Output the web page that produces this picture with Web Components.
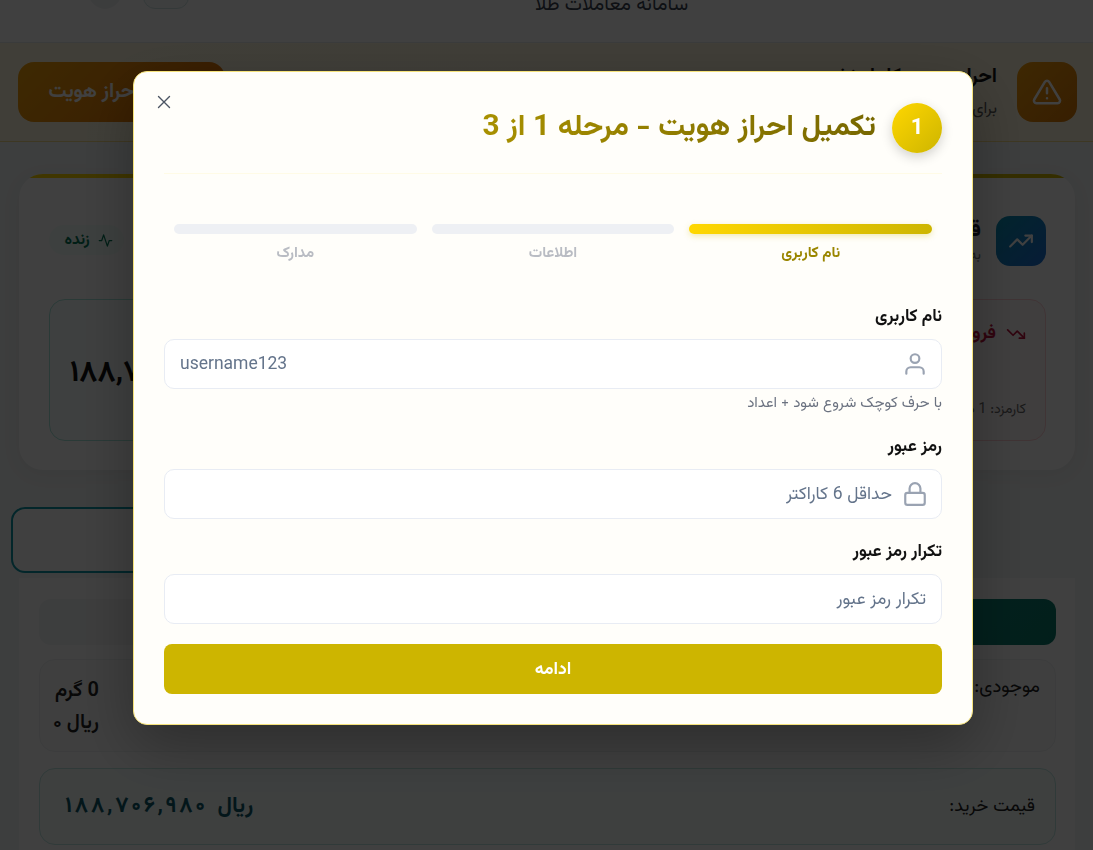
<!DOCTYPE html>
<html lang="fa" dir="rtl">
<head>
<meta charset="utf-8">
<title>سامانه معاملات طلا</title>
<style>
  html, body { margin: 0; height: 850px; overflow: hidden; background: #f2f5f5; }
  body { font-family: Vazirmatn, "Noto Sans Arabic", "DejaVu Sans", sans-serif; color: #1a2030; }
</style>
</head>
<body>
<gold-page>
  <gold-header title-text="سامانه معاملات طلا"></gold-header>
  <kyc-alert></kyc-alert>
  <price-card></price-card>
  <trade-panel></trade-panel>
</gold-page>
<kyc-modal>
  <kyc-field label="نام کاربری" hint="با حرف کوچک شروع شود + اعداد" placeholder="username123" icon="user" ltr></kyc-field>
  <kyc-field label="رمز عبور" placeholder="حداقل 6 کاراکتر" icon="lock" type="password"></kyc-field>
  <kyc-field label="تکرار رمز عبور" placeholder="تکرار رمز عبور" type="password"></kyc-field>
</kyc-modal>

<script>
const base = `:host{box-sizing:border-box} *{box-sizing:border-box}`;

function define(name, html) {
  customElements.define(name, class extends HTMLElement {
    connectedCallback() {
      if (this.shadowRoot) return;
      const root = this.attachShadow({ mode: "open" });
      root.innerHTML = typeof html === "function" ? html(this) : html;
    }
  });
}

define("gold-page", `<style>${base}
  :host{display:flex;flex-direction:column}
</style><slot></slot>`);

define("gold-header", (el) => `<style>${base}
  :host{display:flex;height:43px;background:#fff;border-bottom:1px solid #e6e9ea;position:relative;overflow:hidden;justify-content:center;padding-left:130px}
  .t{font-size:19.6px;color:#3a4252;margin-top:-9px;line-height:30px;height:30px}
  .btns{display:flex;gap:20px;position:absolute;left:87px;top:-34px;direction:ltr}
  .b{width:36px;height:43px;border-radius:50%;background:#f0f2f4}
  .b + .b{width:46px;border-radius:12px;border:1px solid #cfe4e4;background:#f6fafa}
</style><div class="t">${el.getAttribute("title-text")}</div><div class="btns"><div class="b"></div><div class="b"></div></div>`);

define("kyc-alert", `<style>${base}
  :host{display:flex;align-items:center;justify-content:space-between;height:99px;padding:0 16px 0 18px;background:linear-gradient(90deg,#fff8e0,#fff6dd);border-bottom:1px solid #f4dc8a}
  .ic{width:60px;height:60px;border-radius:16px;background:linear-gradient(135deg,#f59e0b,#d97706);display:flex;align-items:center;justify-content:center;color:#fff;flex:none}
  .tx{margin-right:20px;flex:1}
  .tt{font-size:20px;font-weight:700;color:#111;line-height:30px}
  .st{font-size:16px;color:#555;margin-top:6px;line-height:24px}
  .btn{width:207px;height:60px;border-radius:16px;background:linear-gradient(135deg,#f5a30b,#e06a06);color:#fff;font-weight:700;font-size:20px;display:flex;align-items:center;justify-content:center}
</style>
<div class="ic"><svg width="30" height="30" viewBox="0 0 24 24" fill="none" stroke="currentColor" stroke-width="2" stroke-linecap="round" stroke-linejoin="round"><path d="M10.3 3.9 1.8 18a2 2 0 0 0 1.7 3h17a2 2 0 0 0 1.7-3L13.7 3.9a2 2 0 0 0-3.4 0z"/><path d="M12 9v4M12 17h.01"/></svg></div>
<div class="tx"><div class="tt">احراز هویت کامل نشده</div><div class="st">برای معامله احراز هویت کنید</div></div>
<div class="btn">تکمیل احراز هویت</div>`);

define("price-card", `<style>${base}
  :host{display:block;margin:32px 18px 0 19px;height:296px;border-radius:24px;background:#fff;padding:0 29px 0 30px;box-shadow:0 4px 20px rgba(0,0,0,.05);overflow:hidden}
  .stripe{height:4px;margin:0 -29px 0 -30px;background:linear-gradient(90deg,#ffd700,#cdb500)}
  .top{display:flex;justify-content:space-between;align-items:center;height:50px;margin-top:38px}
  .ic{width:50px;height:50px;border-radius:14px;background:linear-gradient(135deg,#0891b2,#1d6fd8);display:flex;align-items:center;justify-content:center;color:#fff}
  .hd{display:flex;gap:15px;align-items:center}
  .tt{font-size:22px;font-weight:700;line-height:30px}
  .st{font-size:14px;color:#777;line-height:20px}
  .live{display:flex;align-items:center;gap:8px;height:30px;width:75px;padding-left:4px;border-radius:15px;background:#f3fdf9;color:#047857;font-size:15.5px;font-weight:700;justify-content:center;margin-top:-2px}
  .boxes{display:grid;grid-template-columns:1fr 1fr;gap:20px;margin-top:33px}
  .box{height:142px;border-radius:16px;border:1px solid #fecdd3;background:#fff8f8;padding:22px 19px}
  .box.buy{border-color:#a7e6dc;background:#f8fffd;display:flex;align-items:center;justify-content:flex-end;padding:6px 20px 0}
  .lab{display:flex;align-items:center;gap:10px;color:#be123c;font-weight:700;font-size:18px;line-height:24px}
  .fee{font-size:14px;color:#666;margin-top:53px}
  .price{font-size:30px;font-weight:700;color:#111}
</style>
<div class="stripe"></div>
<div class="top">
  <div class="hd"><div class="ic"><svg width="26" height="26" viewBox="0 0 24 24" fill="none" stroke="currentColor" stroke-width="2" stroke-linecap="round" stroke-linejoin="round"><path d="m22 7-8.5 8.5-5-5L2 17"/><path d="M16 7h6v6"/></svg></div>
  <div><div class="tt">قیمت لحظه‌ای طلا</div><div class="st">به‌روزرسانی خودکار</div></div></div>
  <div class="live"><svg width="15" height="15" viewBox="0 0 24 24" fill="none" stroke="currentColor" stroke-width="2" stroke-linecap="round" stroke-linejoin="round"><path d="M22 12h-4l-3 9L9 3l-3 9H2"/></svg>زنده</div>
</div>
<div class="boxes">
  <div class="box"><div class="lab"><svg width="20" height="20" viewBox="0 0 24 24" fill="none" stroke="currentColor" stroke-width="2" stroke-linecap="round" stroke-linejoin="round"><path d="m22 17-8.5-8.5-5 5L2 7"/><path d="M16 17h6v-6"/></svg>فروش</div><div class="fee">کارمزد: 1 درصد</div></div>
  <div class="box buy"><div class="price" dir="ltr">۱۸۸,۷۰۶,۹۸۰</div></div>
</div>`);

// letter-spacing does nothing on these digits, so each one gets its own padding
const spaced = (text) => [...text].map((c) => `<i>${c}</i>`).join("");

define("trade-panel", `<style>${base}
  :host{display:block;margin-top:37px}
  .tabs{display:flex;height:66px;padding:0 11px;direction:ltr}
  .tab{height:66px;width:520px;border:2px solid #0d98a8;border-radius:14px;background:#fff}
  .body{margin:5px 18px 0 19px;background:#fff;padding:21px 19px 0 20px;height:300px}
  .row{display:grid;grid-template-columns:1fr 1fr;gap:12px;height:46px}
  .row div{border-radius:12px;background:#f4f5f7}
  .row .act{background:linear-gradient(135deg,#0d9488,#0b7a6c)}
  .inv{display:flex;justify-content:space-between;margin-top:14px;height:93px;border:1px solid #eef0f2;border-radius:16px;padding:15px 15px 0 13px;background:#fafbfb;font-size:18.5px;color:#222}
  .inv > div:first-child{margin-top:-2px}
  .amt{font-weight:600;line-height:32px;font-size:20px}
  .pr{display:flex;justify-content:space-between;align-items:center;margin-top:16px;height:77px;border:1px solid #bfe8e2;border-radius:16px;padding:0 20px 0 24px;background:#f6fdfc;font-size:18px;color:#222}
  .val{display:flex;gap:11px;font-size:22px;font-weight:700;color:#0e5a6a}
  .val b{font-weight:700}
  .val i{font-style:normal;padding:0 1.35px}
</style>
<div class="tabs"><div class="tab"></div></div>
<div class="body">
  <div class="row"><div class="act"></div><div></div></div>
  <div class="inv"><div>موجودی:</div><div class="amt"><div>0 گرم</div><div>ریال ۰</div></div></div>
  <div class="pr"><div>قیمت خرید:</div><div class="val"><span>ریال</span><b dir="ltr">${spaced("۱۸۸,۷۰۶,۹۸۰")}</b></div></div>
</div>`);

define("kyc-field", (el) => {
  const icons = {
    user: `<svg width="26" height="26" viewBox="0 0 24 24" fill="none" stroke="#9aa3b2" stroke-width="2" stroke-linecap="round" stroke-linejoin="round"><circle cx="12" cy="7" r="4"/><path d="M20 21v-2a4 4 0 0 0-4-4H8a4 4 0 0 0-4 4v2"/></svg>`,
    lock: `<svg width="26" height="26" viewBox="0 0 24 24" fill="none" stroke="#9aa3b2" stroke-width="2" stroke-linecap="round" stroke-linejoin="round"><rect x="3" y="11" width="18" height="11" rx="2"/><path d="M7 11V7a5 5 0 0 1 10 0v4"/></svg>`
  };
  const icon = el.getAttribute("icon");
  const hint = el.getAttribute("hint");
  return `<style>${base}
    :host{display:block}
    label{display:block;font-size:17.1px;font-weight:700;color:#111;line-height:22px;margin-bottom:9px;margin-top:-2px;padding-bottom:2px}
    .box{display:flex;align-items:center;gap:10px;height:50px;border:1px solid #e8ecf4;border-radius:10px;background:#fff;padding:0 15px}
    svg{margin-right:-2px;flex:none}
    input{flex:1;min-width:0;border:0;outline:0;background:none;font:inherit;font-size:17.5px;color:#111;padding:0;text-align:right}
    input::placeholder{color:#64748b;opacity:1}
    input.ltr{text-align:left}
    .hint{font-size:15px;color:#6b7280;margin-top:4px;line-height:21px}
  </style>
  <label>${el.getAttribute("label")}</label>
  <div class="box">${icon ? icons[icon] : ""}<input class="${el.hasAttribute("ltr") ? "ltr" : ""}" type="${el.getAttribute("type") || "text"}" placeholder="${el.getAttribute("placeholder")}"></div>
  ${hint ? `<div class="hint">${hint}</div>` : ""}`;
});

define("kyc-modal", `<style>${base}
  :host{position:fixed;inset:0;display:flex;align-items:flex-start;justify-content:center;padding:71px 120px 0 133px;background:rgba(0,0,0,.75)}
  .modal{position:relative;width:840px;height:654px;background:#fffefa;border:1px solid #f5e27a;border-radius:14px;padding:31px 30px 0;box-shadow:0 20px 60px rgba(0,0,0,.3)}
  .close{position:absolute;top:23px;left:23px;width:14px;height:14px;color:#4b5563;display:flex}
  .head{display:flex;align-items:center;gap:16px;padding-bottom:20px;border-bottom:1px solid #fffbe6}
  .num{width:50px;height:50px;border-radius:50%;flex:none;background:linear-gradient(135deg,#ffd700,#cdb500);color:#fff;font-size:22px;font-weight:700;display:flex;align-items:center;justify-content:center;box-shadow:0 4px 12px rgba(0,0,0,.18)}
  h2{margin:0;font-size:29.8px;font-weight:700;background:linear-gradient(90deg,#a89000,#786800);-webkit-background-clip:text;background-clip:text;color:transparent;line-height:40px}
  .steps{display:grid;grid-template-columns:repeat(3,1fr);gap:15px;padding:0 10px;margin-top:50px}
  .step{text-align:center;font-size:15px;font-weight:700;color:#b9bcc3;line-height:20px}
  .bar{height:10px;border-radius:5px;background:#eef0f4;margin-bottom:10px}
  .step.on{color:#9a8600}
  .step.on .bar{background:linear-gradient(90deg,#ffd700,#cdb500);box-shadow:0 2px 6px rgba(205,181,0,.3)}
  .form{display:flex;flex-direction:column;gap:24px;margin-top:44px}
  ::slotted(kyc-field){display:block}
  .form slot{display:contents}
  .go{display:flex;align-items:center;justify-content:center;height:50px;margin-top:20px;border:0;border-radius:8px;background:#cdb500;color:#fff;font:inherit;font-size:17.5px;font-weight:700;width:100%}
</style>
<div class="modal">
  <div class="close"><svg width="14" height="14" viewBox="0 0 14 14" fill="none" stroke="currentColor" stroke-width="1.4" stroke-linecap="round"><path d="M1.5 1.5l11 11M12.5 1.5l-11 11"/></svg></div>
  <div class="head"><div class="num">1</div><h2>تکمیل احراز هویت - مرحله 1 از 3</h2></div>
  <div class="steps">
    <div class="step on"><div class="bar"></div>نام کاربری</div>
    <div class="step"><div class="bar"></div>اطلاعات</div>
    <div class="step"><div class="bar"></div>مدارک</div>
  </div>
  <div class="form"><slot></slot></div>
  <button class="go">ادامه</button>
</div>`);
</script>
</body>
</html>
